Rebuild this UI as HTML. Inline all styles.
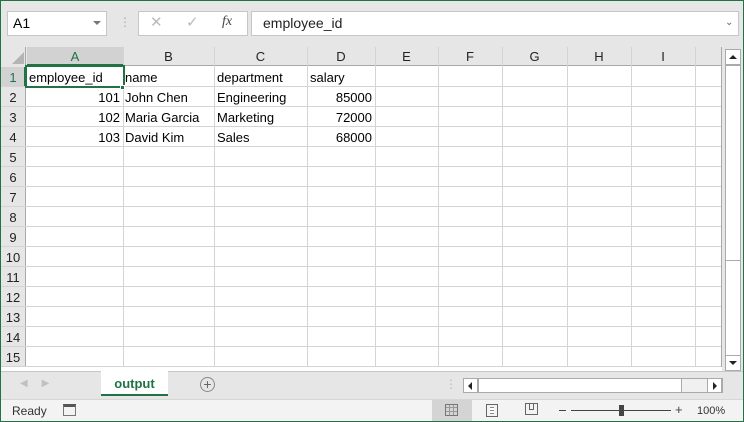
<!DOCTYPE html><html><head><style>
*{margin:0;padding:0;box-sizing:border-box}
body{width:744px;height:422px;position:relative;overflow:hidden;background:#fff;font-family:"Liberation Sans",sans-serif;font-size:13px;color:#000}
.a{position:absolute}
.t{position:absolute;white-space:nowrap;line-height:20px}
.vl{position:absolute;top:47px;width:1px;height:320px;background:#d4d4d4}
.hl{position:absolute;left:0;width:721px;height:1px;background:#d4d4d4}
.ch{position:absolute;top:47px;height:19px;line-height:20px;text-align:center;color:#222;font-size:13px}
.rh{position:absolute;left:0;width:26px;height:20px;line-height:21px;text-align:center;font-size:13px;color:#222}
.c{margin-top:1px}
</style></head><body>
<div class="a" style="left:0;top:0;width:744px;height:47px;background:#e6e6e6"></div>
<div class="a" style="left:7px;top:11px;width:100px;height:25px;background:#fff;border:1px solid #c6c6c6"></div>
<div class="t" style="left:13px;top:13px;font-size:14px">A1</div>
<div class="a" style="left:93px;top:21px;border-left:4px solid transparent;border-right:4px solid transparent;border-top:4px solid #777"></div>
<div class="t" style="left:119px;top:12px;color:#aaa;font-size:12px">⋮</div>
<div class="a" style="left:138px;top:11px;width:110px;height:25px;background:#fff;border:1px solid #c6c6c6"></div>
<div class="t" style="left:150px;top:13px;color:#bbb;font-size:15px">✕</div>
<div class="t" style="left:186px;top:13px;color:#bbb;font-size:15px">✓</div>
<div class="t" style="left:222px;top:12px;color:#444;font-style:italic;font-family:'Liberation Serif',serif;font-size:14px">fx</div>
<div class="a" style="left:251px;top:11px;width:488px;height:25px;background:#fff;border:1px solid #c6c6c6"></div>
<div class="t" style="left:263px;top:13px;font-size:14px;color:#222">employee_id</div>
<div class="t" style="left:725px;top:13px;font-size:10px;color:#666">⌄</div>
<div class="a" style="left:0;top:47px;width:721px;height:19px;background:#e6e6e6;border-bottom:1px solid #aaa"></div>
<div class="a" style="left:0;top:47px;width:26px;height:320px;background:#e6e6e6;border-right:1px solid #aaa"></div>
<div class="a" style="left:12px;top:52px;border-left:12px solid transparent;border-bottom:12px solid #b4b4b4"></div>
<div class="a" style="left:27px;top:47px;width:96px;height:19px;background:#d2d2d2;border-bottom:2px solid #217346"></div>
<div class="a" style="left:0;top:67px;width:26px;height:19px;background:#d2d2d2;border-right:2px solid #217346"></div>
<div class="ch" style="left:27px;width:96px;color:#217346">A</div>
<div class="ch" style="left:123px;width:91px">B</div>
<div class="ch" style="left:214px;width:93px">C</div>
<div class="ch" style="left:307px;width:68px">D</div>
<div class="ch" style="left:375px;width:63px">E</div>
<div class="ch" style="left:438px;width:64px">F</div>
<div class="ch" style="left:502px;width:65px">G</div>
<div class="ch" style="left:567px;width:64px">H</div>
<div class="ch" style="left:631px;width:64px">I</div>
<div class="vl" style="left:123px"></div><div class="vl" style="left:214px"></div><div class="vl" style="left:307px"></div><div class="vl" style="left:375px"></div><div class="vl" style="left:438px"></div><div class="vl" style="left:502px"></div><div class="vl" style="left:567px"></div><div class="vl" style="left:631px"></div><div class="vl" style="left:695px"></div>
<div class="a" style="left:721px;top:47px;width:1px;height:320px;background:#aaa"></div>
<div class="hl" style="top:86px"></div><div class="hl" style="top:106px"></div><div class="hl" style="top:126px"></div><div class="hl" style="top:146px"></div><div class="hl" style="top:166px"></div><div class="hl" style="top:186px"></div><div class="hl" style="top:206px"></div><div class="hl" style="top:226px"></div><div class="hl" style="top:246px"></div><div class="hl" style="top:266px"></div><div class="hl" style="top:286px"></div><div class="hl" style="top:306px"></div><div class="hl" style="top:326px"></div><div class="hl" style="top:346px"></div><div class="hl" style="top:366px"></div>
<div class="rh" style="top:67px;color:#217346">1</div><div class="rh" style="top:87px">2</div><div class="rh" style="top:107px">3</div><div class="rh" style="top:127px">4</div><div class="rh" style="top:147px">5</div><div class="rh" style="top:167px">6</div><div class="rh" style="top:187px">7</div><div class="rh" style="top:207px">8</div><div class="rh" style="top:227px">9</div><div class="rh" style="top:247px">10</div><div class="rh" style="top:267px">11</div><div class="rh" style="top:287px">12</div><div class="rh" style="top:307px">13</div><div class="rh" style="top:327px">14</div><div class="rh" style="top:347px">15</div>
<div class="a" style="left:25px;top:65px;width:100px;height:23px;border:2px solid #217346"></div>
<div class="a" style="left:120px;top:85px;width:5px;height:5px;background:#217346;border:1px solid #fff"></div>
<div class="t" style="left:29px;top:68px">employee_id</div>
<div class="t" style="left:125px;top:68px">name</div>
<div class="t" style="left:217px;top:68px">department</div>
<div class="t" style="left:310px;top:68px">salary</div>
<div class="t" style="left:27px;width:93px;text-align:right;top:88px">101</div>
<div class="t" style="left:27px;width:93px;text-align:right;top:108px">102</div>
<div class="t" style="left:27px;width:93px;text-align:right;top:128px">103</div>
<div class="t" style="left:125px;top:88px">John Chen</div><div class="t" style="left:125px;top:108px">Maria Garcia</div><div class="t" style="left:125px;top:128px">David Kim</div>
<div class="t" style="left:217px;top:88px">Engineering</div><div class="t" style="left:217px;top:108px">Marketing</div><div class="t" style="left:217px;top:128px">Sales</div>
<div class="t" style="left:307px;width:65px;text-align:right;top:88px">85000</div><div class="t" style="left:307px;width:65px;text-align:right;top:108px">72000</div><div class="t" style="left:307px;width:65px;text-align:right;top:128px">68000</div>
<div class="a" style="left:722px;top:47px;width:22px;height:325px;background:#e6e6e6"></div>
<div class="a" style="left:725px;top:49px;width:16px;height:322px;background:#fff;border:1px solid #aaa"></div>
<div class="a" style="left:725px;top:49px;width:16px;height:16px;border:1px solid #aaa;background:#fff"></div>
<div class="a" style="left:729px;top:55px;border-left:4px solid transparent;border-right:4px solid transparent;border-bottom:4px solid #222"></div>
<div class="a" style="left:725px;top:355px;width:16px;height:16px;border:1px solid #aaa;background:#fff"></div>
<div class="a" style="left:729px;top:361px;border-left:4px solid transparent;border-right:4px solid transparent;border-top:4px solid #222"></div>
<div class="a" style="left:725px;top:65px;width:16px;height:196px;border:1px solid #aaa;background:#fff"></div>
<div class="a" style="left:0;top:371px;width:744px;height:28px;background:#e6e6e6;border-top:1px solid #c6c6c6"></div>
<div class="t" style="left:20px;top:374px;color:#c0c0c0;font-size:10px">◀&nbsp;&nbsp;&nbsp;&nbsp;&nbsp;▶</div>
<div class="a" style="left:101px;top:370px;width:67px;height:26px;background:#fff;border-bottom:2px solid #217346"></div>
<div class="t" style="left:101px;top:374px;width:67px;text-align:center;font-weight:bold;color:#217346">output</div>
<div class="a" style="left:200px;top:377px;width:15px;height:15px;border:1px solid #888;border-radius:50%;text-align:center;line-height:12px;color:#666;font-size:14px">+</div>
<div class="t" style="left:445px;top:374px;color:#bbb;font-size:12px">⋮</div>
<div class="a" style="left:463px;top:378px;width:260px;height:15px;background:#fff;border:1px solid #aaa"></div>
<div class="a" style="left:463px;top:378px;width:15px;height:15px;border:1px solid #aaa;background:#fff"></div>
<div class="a" style="left:468px;top:382px;border-top:4px solid transparent;border-bottom:4px solid transparent;border-right:4px solid #222"></div>
<div class="a" style="left:478px;top:378px;width:204px;height:15px;border:1px solid #aaa;background:#fff"></div>
<div class="a" style="left:682px;top:379px;width:26px;height:13px;background:#f0f0f0"></div>
<div class="a" style="left:707px;top:378px;width:15px;height:15px;border:1px solid #aaa;background:#fff"></div>
<div class="a" style="left:713px;top:382px;border-top:4px solid transparent;border-bottom:4px solid transparent;border-left:4px solid #222"></div>
<div class="a" style="left:0;top:399px;width:744px;height:23px;background:#f3f3f3;border-top:1px solid #d6d6d6"></div>
<div class="t" style="left:12px;top:401px;font-size:12px;color:#333">Ready</div>
<div class="a" style="left:63px;top:404px;width:13px;height:12px;border:1px solid #777;border-top:3px solid #555"></div>
<div class="a" style="left:432px;top:400px;width:40px;height:22px;background:#d4d4d4"></div>
<div class="a" style="left:445px;top:404px;width:13px;height:12px;border:1px solid #777;background:repeating-linear-gradient(90deg,transparent 0 3px,#999 3px 4px),repeating-linear-gradient(0deg,transparent 0 3px,#999 3px 4px)"></div>
<div class="a" style="left:486px;top:404px;width:12px;height:13px;border:1px solid #666;background:repeating-linear-gradient(0deg,#fff 0 2px,#888 2px 3px);background-clip:content-box;padding:2px 3px"></div>
<div class="a" style="left:525px;top:403px;width:13px;height:12px;border:1px solid #666"></div>
<div class="a" style="left:529px;top:403px;width:5px;height:7px;border:1px solid #666;border-top:none"></div>
<div class="a" style="left:559px;top:410px;width:7px;height:1px;background:#444"></div>
<div class="a" style="left:571px;top:410px;width:100px;height:1px;background:#444"></div>
<div class="a" style="left:619px;top:405px;width:5px;height:11px;background:#444"></div>
<div class="t" style="left:675px;top:400px;font-size:13px;color:#444">+</div>
<div class="t" style="left:697px;top:401px;font-size:11px;color:#333">100%</div>
<div class="a" style="left:0;top:0;width:744px;height:422px;border:1px solid #217346;pointer-events:none"></div>
</body></html>
